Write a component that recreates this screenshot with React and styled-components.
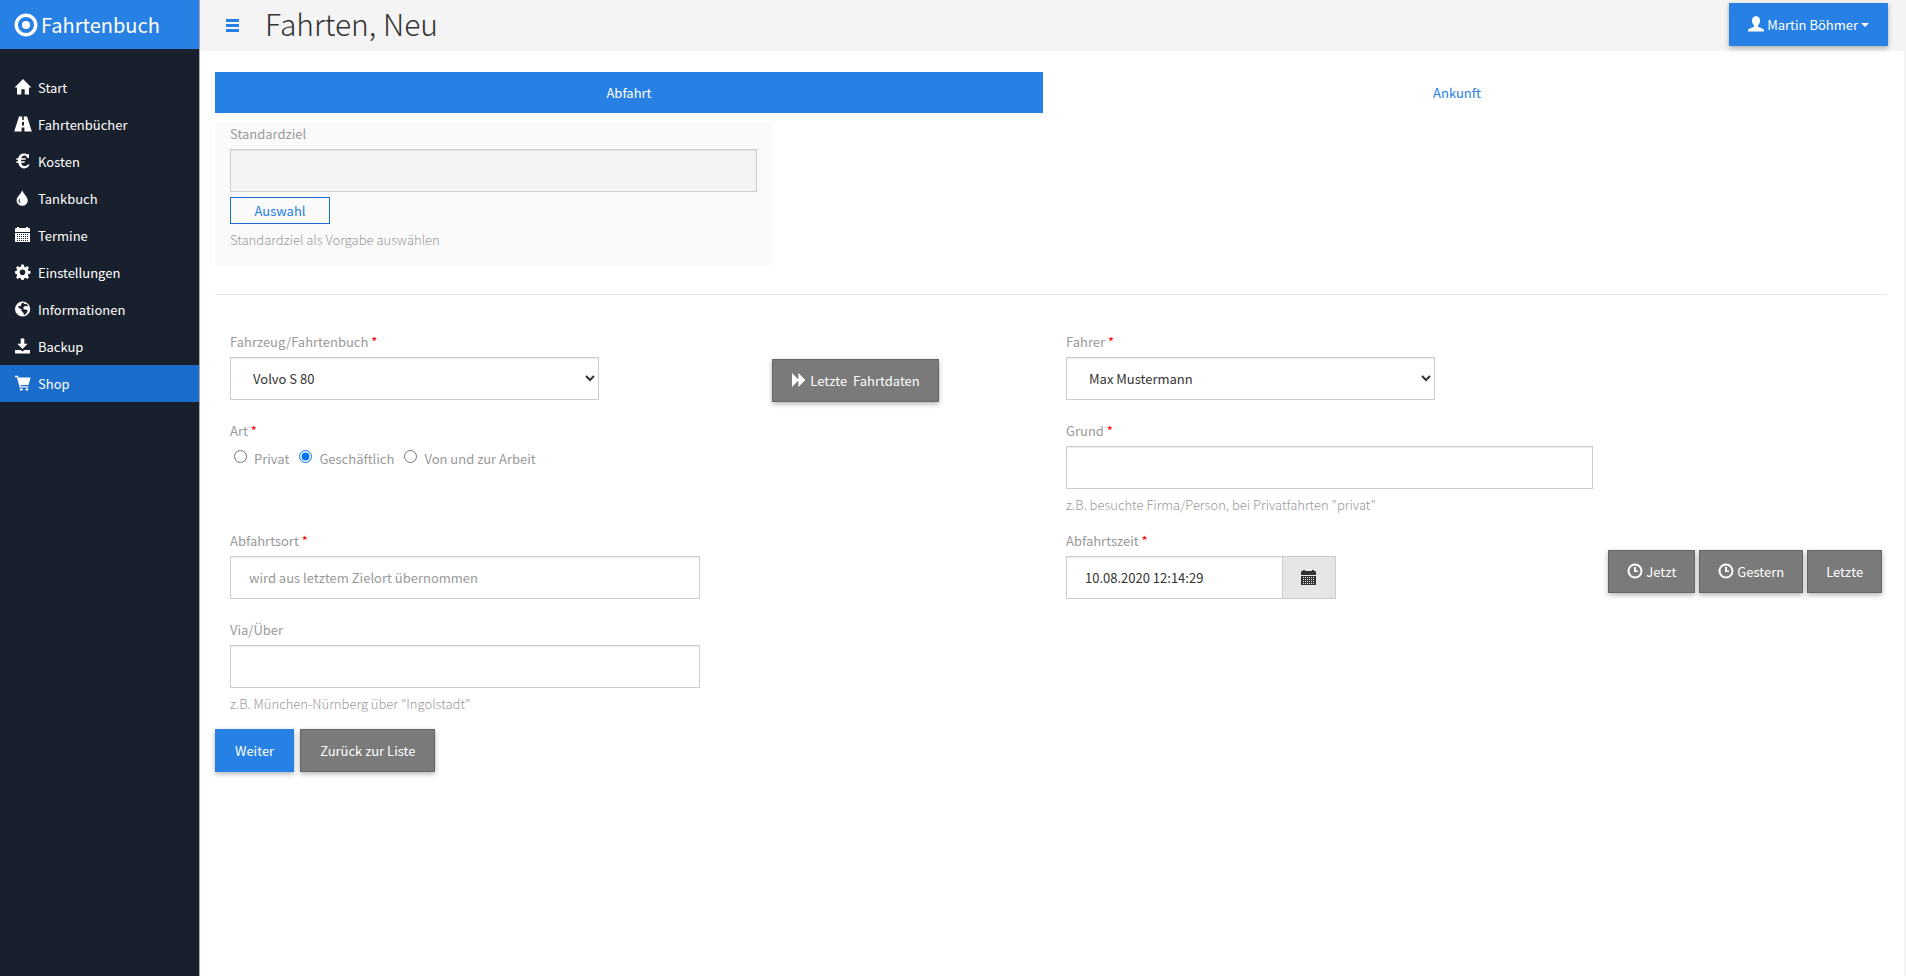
import React from "react";
import styled, { createGlobalStyle, css } from "styled-components";

const BLUE = "#2780e3";

const GlobalStyle = createGlobalStyle`
  *, *::before, *::after {
    box-sizing: border-box;
  }
  body {
    margin: 0;
    background: #fff;
    color: #333;
    font-family: "Noto Sans CJK SC", "Open Sans", sans-serif;
    font-size: 13px;
    line-height: 20px;
  }
  button, input, select {
    font: inherit;
    margin: 0;
  }
`;

// day marks punched out of the calendar sheet
const calendarDays = [7, 9, 11, 13]
  .flatMap((y) => [2, 4, 6, 8, 10, 12].map((x) => `M${x} ${y}V${y + 1}H${x + 1}V${y}Z`))
  .join("");

const icons = {
  ring: (
    <>
      <circle cx="8" cy="8" r="6.5" fill="none" stroke="currentColor" strokeWidth="2.3" />
      <circle cx="8" cy="8" r="2.7" />
    </>
  ),
  home: <path d="M8 0 16.4 8.4H14V15.4H9.7V10.2H6.3V15.4H2V8.4H-.4Z" />,
  road: <path d="M4 .5H7.2V4H8.8V.5H12L16.8 15.5H9.4V11.5H6.6V15.5H-.8ZM7 6V9.5H9V6Z" fillRule="evenodd" />,
  euro: <path d="M14 1V5H12.2C11.9 3.3 10.9 2.5 9.4 2.5 7.8 2.5 6.8 3.5 6.3 5.2H11L10.4 6.8H6.1V8.2H10L9.4 9.8H6.2C6.6 12 7.6 13.1 9.4 13.1 11.1 13.1 12.4 12.2 13.3 10.9L14.5 12.1C13.4 14.1 11.6 15.4 9.1 15.4 5.8 15.4 3.8 13.3 3.2 9.8H1L1.6 8.2H3V6.8H1L1.6 5.2H3.2C3.9 2.1 5.9.4 9 .4 10.6.4 11.8.8 12.6 1.8V1Z" />,
  tint: <path d="M7.2 0C8.1 4 12.8 6.3 12.8 10.6A5.6 5.2 0 0 1 1.6 10.6C1.6 6.3 6.3 4 7.2 0ZM4.7 8.1C3 10 3.2 12.5 5.7 13.4 4.5 11.6 4.5 9.8 4.7 8.1Z" fillRule="evenodd" />,
  calendar: (
    <path
      d={`M0 5V2Q0 1 1 1H2V0H4V1H11V0H13V1H14Q15 1 15 2V5ZM0 6H15V15H0Z${calendarDays}`}
      fillRule="evenodd"
    />
  ),
  cog: (
    <path
      d="M6.3.5H8.7L9 2.6 10.5 3.2 12.3 2 14 3.7 12.8 5.5 13.4 6.8 15.5 7.2V9.6L13.4 10 12.8 11.5 14 13.3 12.3 15 10.5 13.8 9 14.4 8.7 16H6.3L6 14.4 4.5 13.8 2.7 15 1 13.3 2.2 11.5 1.6 10 0 9.6V7.2L1.6 6.8 2.2 5.5 1 3.7 2.7 2 4.5 3.2 6 2.6ZM7.5 5.5A2.8 2.8 0 1 0 7.5 11.1A2.8 2.8 0 1 0 7.5 5.5Z"
      fillRule="evenodd"
    />
  ),
  globe: (
    <path
      d="M7.6.4A7.6 7.6 0 1 0 7.6 15.6A7.6 7.6 0 1 0 7.6.4ZM6.6 2.2 8.6 1.8 9.2 3 11.2 2.8 13.2 4.8 12 5.6 10.6 4.8 8.6 6 8.2 7.6 9.8 8.4 12.6 9C12.6 11.4 10.8 13.6 9 14L8.2 11.4 6.4 10 6.6 8.2 4.4 7.6 3 5.4 4.6 4.8 5.6 5.4Z"
      fillRule="evenodd"
    />
  ),
  save: <path d="M5.7.5H9.3V5.8H12.7L7.5 11 2.3 5.8H5.7ZM0 12H5.5L7.5 13.4 9.5 12H15V15.5H0Z" />,
  cart: <path d="M0 .8H2.9L3.5 2.6H15.6L13.5 9.9H5.6L5.9 11.2H13.4V12.6H4.7L2 2.3H0ZM5 13.4H7.6V15.4H5ZM10.6 13.4H13.2V15.4H10.6Z" />,
  bars: <path d="M1 2H14V5H1ZM1 7H14V10H1ZM1 12H14V15H1Z" />,
  user: <path d="M8 .3C10.7.3 12 2 12 4.6 12 6.6 11.3 8.4 10 9.5V10.7C11.5 11.6 14 12 15.2 13 15.9 13.6 16 14.5 16 15.5H0C0 14.5.1 13.6.8 13 2 12 4.5 11.6 6 10.7V9.5C4.7 8.4 4 6.6 4 4.6 4 2 5.3.3 8 .3Z" />,
  forward: <path d="M1 1 7.4 7.4V1L14.4 8 7.4 15V8.6L1 15Z" />,
  clock: (
    <>
      <circle cx="8" cy="8" r="6.5" fill="none" stroke="currentColor" strokeWidth="2" />
      <path d="M7 4H9V7.5H11V9H7Z" />
    </>
  ),
};

function Icon({ name, size = 16 }) {
  return (
    <Glyph width={size} height={size} viewBox="0 0 16 16" fill="currentColor" aria-hidden="true">
      {icons[name]}
    </Glyph>
  );
}

const navItems = [
  { icon: "home", label: "Start" },
  { icon: "road", label: "Fahrtenbücher" },
  { icon: "euro", label: "Kosten" },
  { icon: "tint", label: "Tankbuch" },
  { icon: "calendar", label: "Termine" },
  { icon: "cog", label: "Einstellungen" },
  { icon: "globe", label: "Informationen" },
  { icon: "save", label: "Backup" },
  { icon: "cart", label: "Shop", active: true },
];

const tripTypes = ["Privat", "Geschäftlich", "Von und zur Arbeit"];

function Required() {
  return <Star>*</Star>;
}

export default function App() {
  return (
    <>
      <GlobalStyle />
      <Page>
        <Sidebar>
          <Brand href="#">
            <Icon name="ring" size={24} />
            Fahrtenbuch
          </Brand>
          <Nav>
            {navItems.map((item) => (
              <NavLink key={item.label} href="#" $active={item.active}>
                <Icon name={item.icon} />
                {item.label}
              </NavLink>
            ))}
          </Nav>
        </Sidebar>

        <Main>
          <Header>
            <MenuButton type="button" aria-label="Menü">
              <Icon name="bars" />
            </MenuButton>
            <Title>Fahrten, Neu</Title>
            <Button type="button" $primary>
              <Icon name="user" />
              Martin Böhmer
              <Caret />
            </Button>
          </Header>

          <Form onSubmit={(e) => e.preventDefault()}>
            <Tabs>
              <Tab href="#abfahrt" $active>Abfahrt</Tab>
              <Tab href="#ankunft">Ankunft</Tab>
            </Tabs>

            <Panel>
              <Label htmlFor="standardziel">Standardziel</Label>
              <Input id="standardziel" readOnly />
              <SelectButton type="button">Auswahl</SelectButton>
              <Help>Standardziel als Vorgabe auswählen</Help>
            </Panel>

            <Divider />

            <Rows>
              <Row>
                <Half>
                  <Field>
                    <Label htmlFor="fahrzeug">Fahrzeug/Fahrtenbuch <Required /></Label>
                    <Select id="fahrzeug">
                      <option>Volvo S 80</option>
                    </Select>
                  </Field>
                  <Actions>
                    <Button type="button">
                      <Icon name="forward" />
                      Letzte&nbsp; Fahrtdaten
                    </Button>
                  </Actions>
                </Half>
                <Half>
                  <Field>
                    <Label htmlFor="fahrer">Fahrer <Required /></Label>
                    <Select id="fahrer">
                      <option>Max Mustermann</option>
                    </Select>
                  </Field>
                </Half>
              </Row>

              <Row>
                <Half>
                  <RadioGroup>
                    <Legend>Art <Required /></Legend>
                    <Options>
                      {tripTypes.map((type) => (
                        <RadioLabel key={type}>
                          <Radio name="art" defaultChecked={type === "Geschäftlich"} />
                          {type}
                        </RadioLabel>
                      ))}
                    </Options>
                  </RadioGroup>
                </Half>
                <Half>
                  <Field>
                    <Label htmlFor="grund">Grund <Required /></Label>
                    <Input id="grund" />
                    <Help>z.B. besuchte Firma/Person, bei Privatfahrten "privat"</Help>
                  </Field>
                </Half>
              </Row>

              <Row>
                <Half>
                  <Field $wide>
                    <Label htmlFor="abfahrtsort">Abfahrtsort <Required /></Label>
                    <Input id="abfahrtsort" $medium placeholder="wird aus letztem Zielort übernommen" />
                  </Field>
                </Half>
                <Half>
                  <Field>
                    <Label htmlFor="abfahrtszeit">Abfahrtszeit <Required /></Label>
                    <InputGroup>
                      <Input id="abfahrtszeit" defaultValue="10.08.2020 12:14:29" />
                      <Addon type="button" aria-label="Kalender">
                        <Icon name="calendar" />
                      </Addon>
                    </InputGroup>
                  </Field>
                  <Actions $raised>
                    <Button type="button"><Icon name="clock" />Jetzt</Button>
                    <Button type="button"><Icon name="clock" />Gestern</Button>
                    <Button type="button">Letzte</Button>
                  </Actions>
                </Half>
              </Row>

              <Row>
                <Half>
                  <Field $wide>
                    <Label htmlFor="via">Via/Über</Label>
                    <Input id="via" $medium />
                    <Help>z.B. München-Nürnberg über "Ingolstadt"</Help>
                  </Field>
                </Half>
              </Row>
            </Rows>

            <Footer>
              <Button type="submit" $primary>Weiter</Button>
              <Button type="button">Zurück zur Liste</Button>
            </Footer>
          </Form>
        </Main>
      </Page>
    </>
  );
}

const Glyph = styled.svg`
  flex: none;
  overflow: visible;
`;

const Page = styled.div`
  display: flex;
  min-height: 100vh;
`;

const Sidebar = styled.aside`
  flex: none;
  width: 200px;
  background: #19202d;
  border-right: 1px solid #aaa;
`;

const Brand = styled.a`
  display: flex;
  align-items: center;
  gap: 3px;
  height: 49px;
  padding: 0 14px;
  background: ${BLUE};
  color: #fff;
  font-size: 20px;
  text-decoration: none;
`;

const Nav = styled.nav`
  padding-top: 20px;
`;

const NavLink = styled.a`
  display: flex;
  align-items: center;
  gap: 7px;
  height: 37px;
  padding: 0 15px;
  background: ${({ $active }) => ($active ? "#1b6dcb" : "transparent")};
  color: #fff;
  text-decoration: none;

  ${Glyph} {
    margin-bottom: 2px;
  }
`;

const Main = styled.main`
  flex: 1;
  min-width: 0;
  border-right: 2px solid #f4f4f4;
`;

const Header = styled.header`
  display: flex;
  align-items: center;
  height: 51px;
  padding: 0 16px 2px 25px;
  background: #f4f4f4;
`;

const MenuButton = styled.button`
  display: flex;
  padding: 0;
  border: 0;
  background: none;
  color: ${BLUE};
`;

const Title = styled.h1`
  flex: 1;
  margin: 0 0 4px 24px;
  font-size: 30px;
  font-weight: 300;
  line-height: 44px;
`;

const Button = styled.button`
  display: flex;
  align-items: center;
  gap: 3px;
  height: 43px;
  padding: 0 18px;
  border: 1px solid ${({ $primary }) => ($primary ? BLUE : "#666")};
  background: ${({ $primary }) => ($primary ? BLUE : "#7a7a7a")};
  box-shadow: 0 2px 5px rgba(0, 0, 0, 0.3);
  color: #fff;
  white-space: nowrap;

  ${Glyph} {
    margin-bottom: 2px;
  }
`;

const Caret = styled.span`
  border: 4px solid transparent;
  border-top-color: currentColor;
  border-bottom: 0;
`;

const Form = styled.form`
  padding: 21px 17px 0 15px;
`;

const Tabs = styled.nav`
  display: flex;
  padding-right: 16px;
`;

const Tab = styled.a`
  flex: 1;
  padding: 11px 0 10px;
  background: ${({ $active }) => ($active ? BLUE : "transparent")};
  color: ${({ $active }) => ($active ? "#fff" : BLUE)};
  text-align: center;
  text-decoration: none;
`;

const Panel = styled.section`
  width: calc(100% / 3);
  margin-top: 10px;
  padding: 1px 15px 15px;
  background: #fafafa;
`;

const Label = styled.label`
  display: block;
  margin-bottom: 5px;
  color: #999;
`;

const Star = styled.span`
  color: red;
`;

const control = css`
  display: block;
  height: 43px;
  border: 1px solid #ccc;
  border-radius: 0;
  background: #fff;
  box-shadow: inset 0 1px 1px rgba(0, 0, 0, 0.075);
  color: #333;
`;

const Input = styled.input`
  ${control}
  width: ${({ $medium }) => ($medium ? "calc(100% * 7 / 12)" : "100%")};
  padding: 0 18px;

  &::placeholder {
    color: #999;
    opacity: 1;
  }

  &:read-only {
    background: #f4f4f4;
  }
`;

const Select = styled.select`
  ${control}
  width: 70%;
  padding: 0 0 0 18px;
`;

const SelectButton = styled.button`
  display: block;
  width: 100px;
  height: 27px;
  margin-top: 5px;
  padding: 0;
  border: 1px solid #1b6dcb;
  background: none;
  color: ${BLUE};
`;

const Help = styled.p`
  margin: 6px 0 0;
  color: #999;
  font-weight: 300;
`;

const Divider = styled.hr`
  margin: 29px 0 37px;
  border: 0;
  border-top: 1px solid #e6e6e6;
`;

const Rows = styled.div`
  display: grid;
  gap: 1px;
`;

const Row = styled.div`
  display: grid;
  grid-template-columns: 1fr 1fr;
  min-height: 88px;
`;

const Half = styled.div`
  display: flex;
  align-items: flex-start;
`;

const Field = styled.div`
  flex: none;
  width: ${({ $wide }) => ($wide ? "100%" : "calc(100% * 2 / 3)")};
  padding: 0 15px;

  ${Help} {
    margin-bottom: 15px;
  }
`;

const Actions = styled.div`
  display: flex;
  gap: 4px;
  padding-top: ${({ $raised }) => ($raised ? "19px" : "27px")};
`;

const RadioGroup = styled.fieldset`
  margin: 0;
  padding: 0 15px;
  border: 0;
`;

const Legend = styled.legend`
  padding: 0;
  color: #999;
`;

const Options = styled.div`
  display: flex;
  gap: 10px;
  margin: 8px 0 0 4px;
`;

const RadioLabel = styled.label`
  display: flex;
  gap: 7px;
  color: #999;
`;

const Radio = styled.input.attrs({ type: "radio" })`
  width: 13px;
  height: 13px;
  margin-top: 1px;
`;

const InputGroup = styled.div`
  display: flex;
  width: 270px;
`;

const Addon = styled.button`
  display: flex;
  flex: none;
  align-items: center;
  justify-content: center;
  width: 53px;
  padding: 0;
  border: 1px solid #ccc;
  border-left: 0;
  background: #e6e6e6;
  color: #333;
`;

const Footer = styled.div`
  display: flex;
  gap: 6px;

  ${Button} {
    padding: 0 19px;
  }
`;
